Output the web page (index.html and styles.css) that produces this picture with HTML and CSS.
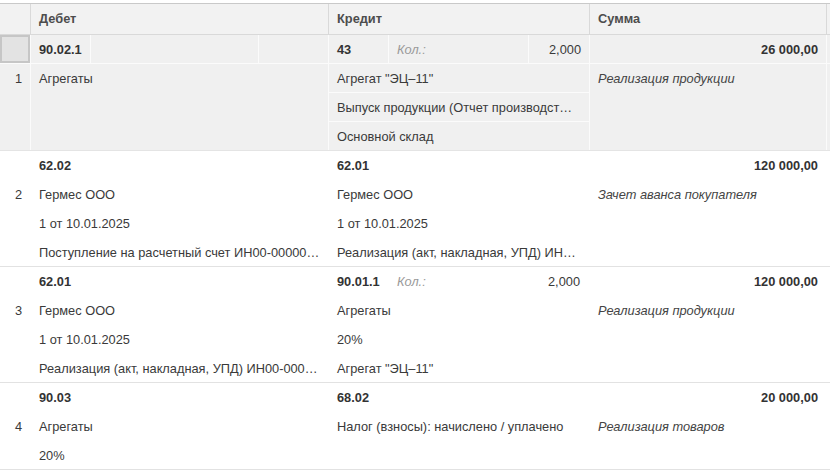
FILE: index.html
```html
<!DOCTYPE html>
<html lang="ru">
<head>
<meta charset="utf-8">
<title>Проводки</title>
<link rel="stylesheet" href="styles.css">
</head>
<body>
<div class="table">
  <div class="grid head">
    <div class="hc"></div>
    <div class="hc">Дебет</div>
    <div class="hc">Кредит</div>
    <div class="hc">Сумма</div>
    <div class="hc last"></div>
  </div>

  <div class="grid group selected">
    <div class="col num">
      <div class="sub"><span class="marker"></span></div>
      <div class="sub">1</div>
    </div>
    <div class="col">
      <div class="sub split deb">
        <span class="cell acc b">90.02.1</span><span class="cell mid"></span><span class="cell end"></span>
      </div>
      <div class="sub">Агрегаты</div>
    </div>
    <div class="col">
      <div class="sub split cred">
        <span class="cell acc b">43</span><span class="cell mid qty">Кол.:</span><span class="cell end val">2,000</span>
      </div>
      <div class="sub line">Агрегат "ЭЦ–11"</div>
      <div class="sub line">Выпуск продукции (Отчет производст…</div>
      <div class="sub">Основной склад</div>
    </div>
    <div class="col">
      <div class="sub amount b">26 000,00</div>
      <div class="sub note">Реализация продукции</div>
    </div>
    <div class="col rest"><div class="sub"></div></div>
  </div>

  <div class="grid group">
    <div class="col num">
      <div class="sub"></div>
      <div class="sub">2</div>
    </div>
    <div class="col">
      <div class="sub b">62.02</div>
      <div class="sub">Гермес ООО</div>
      <div class="sub">1 от 10.01.2025</div>
      <div class="sub">Поступление на расчетный счет ИН00-00000…</div>
    </div>
    <div class="col">
      <div class="sub b">62.01</div>
      <div class="sub">Гермес ООО</div>
      <div class="sub">1 от 10.01.2025</div>
      <div class="sub">Реализация (акт, накладная, УПД) ИН…</div>
    </div>
    <div class="col">
      <div class="sub amount b">120 000,00</div>
      <div class="sub note">Зачет аванса покупателя</div>
    </div>
    <div class="col rest"></div>
  </div>

  <div class="grid group">
    <div class="col num">
      <div class="sub"></div>
      <div class="sub">3</div>
    </div>
    <div class="col">
      <div class="sub b">62.01</div>
      <div class="sub">Гермес ООО</div>
      <div class="sub">1 от 10.01.2025</div>
      <div class="sub">Реализация (акт, накладная, УПД) ИН00-000…</div>
    </div>
    <div class="col">
      <div class="sub split cred">
        <span class="cell acc b">90.01.1</span><span class="cell mid qty">Кол.:</span><span class="cell end val">2,000</span>
      </div>
      <div class="sub">Агрегаты</div>
      <div class="sub">20%</div>
      <div class="sub">Агрегат "ЭЦ–11"</div>
    </div>
    <div class="col">
      <div class="sub amount b">120 000,00</div>
      <div class="sub note">Реализация продукции</div>
    </div>
    <div class="col rest"></div>
  </div>

  <div class="grid group">
    <div class="col num">
      <div class="sub"></div>
      <div class="sub">4</div>
    </div>
    <div class="col">
      <div class="sub b">90.03</div>
      <div class="sub">Агрегаты</div>
      <div class="sub">20%</div>
    </div>
    <div class="col">
      <div class="sub b">68.02</div>
      <div class="sub">Налог (взносы): начислено / уплачено</div>
    </div>
    <div class="col">
      <div class="sub amount b">20 000,00</div>
      <div class="sub note">Реализация товаров</div>
    </div>
    <div class="col rest"></div>
  </div>
</div>
</body>
</html>
```

FILE: styles.css
```css
* { box-sizing: border-box; }
html, body { margin: 0; padding: 0; background: #fff; }
body {
  font-family: "Liberation Sans", Arial, sans-serif;
  font-size: 12.8px;
  color: #3a3a3a;
  width: 830px;
  height: 472px;
  overflow: hidden;
}
.table { padding-top: 3px; }
.grid {
  display: grid;
  grid-template-columns: 31px 298px 261px 237px 1fr;
}
.head {
  background: #f2f2f2;
  border-top: 1px solid #c9c9c9;
  border-bottom: 1px solid #d9d9d9;
  height: 32px;
}
.hc {
  height: 30px;
  line-height: 30px;
  padding-left: 8px;
  border-right: 1px solid #d9d9d9;
  color: #4d4d4d;
  font-weight: bold;
}
.hc.last { border-right: 0; }

.group { border-bottom: 1px solid #e2e2e2; }
.selected { background: #f0f0f0; border-bottom-color: #e4e4e4; }
.col { border-right: 1px solid transparent; min-width: 0; }
.selected .col { border-right-color: #fbfbfb; }
.selected .col.rest { border-right: 0; }

.sub {
  height: 29px;
  line-height: 29px;
  padding: 0 8px;
  white-space: nowrap;
  overflow: hidden;
  text-overflow: ellipsis;
}
.col .sub:last-child { height: 28px; }
.selected .col .sub:first-child { border-bottom: 1px solid #fbfbfb; height: 29px; }
.selected .col .sub.line { border-bottom: 1px solid #fbfbfb; }
.selected .col.num .sub:first-child { padding: 0; }

.num .sub { text-align: right; padding: 0 8px 0 0; }
.marker {
  display: block;
  width: 30px;
  height: 28px;
  background: #e3e3e3;
  border: 2px solid #c6c6c6;
}
.b { font-weight: bold; color: #333; }
.amount { text-align: right; }
.note { font-style: italic; color: #444; }

.split { display: flex; padding: 0; }
.cell { display: block; height: 28px; line-height: 29px; padding: 0 8px; border-right: 1px solid transparent; overflow: hidden; }
.selected .cell { border-right-color: #fbfbfb; }
.selected .cell.end { border-right: 0; }
.deb .acc { width: 60px; }
.deb .mid { width: 168px; }
.deb .end { width: 69px; }
.cred .acc { width: 60px; }
.cred .mid { width: 140px; }
.cred .end { width: 60px; }
.qty { font-style: italic; color: #9a9a9a; }
.val { text-align: right; }
```
